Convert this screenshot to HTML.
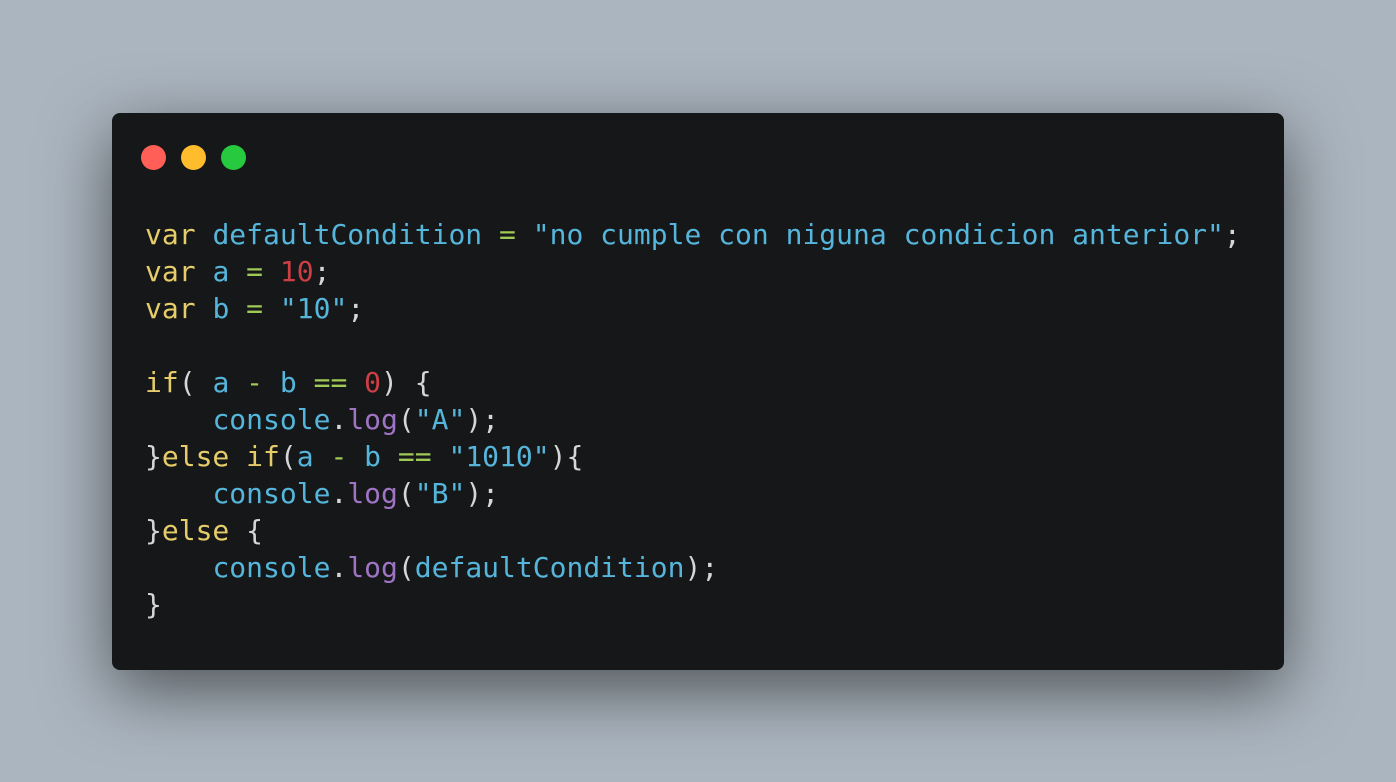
<!DOCTYPE html>
<html><head><style>
html,body{margin:0;padding:0;width:1396px;height:782px;overflow:hidden;background:#abb5bf;}
.win{position:absolute;left:112px;top:113px;width:1172px;height:557px;background:#151718;border-radius:8px;box-shadow:0 20px 68px rgba(0,0,0,0.55);}
.dot{position:absolute;top:32px;width:25px;height:25px;border-radius:50%;}
pre{position:absolute;left:33px;top:103px;margin:0;font-family:"DejaVu Sans Mono","Liberation Mono",monospace;font-size:28px;line-height:37px;color:#d6d6d6;}
.k{color:#e6cd69}.v{color:#55b5db}.o{color:#9fca56}.n{color:#cd3f45}.f{color:#a074c4}
</style></head><body>
<div class="win">
<div class="dot" style="left:29px;background:#ff5f56"></div>
<div class="dot" style="left:69px;background:#ffbd2e"></div>
<div class="dot" style="left:109px;background:#27c93f"></div>
<pre><span class="k">var</span> <span class="v">defaultCondition</span> <span class="o">=</span> <span class="v">"no cumple con niguna condicion anterior"</span>;
<span class="k">var</span> <span class="v">a</span> <span class="o">=</span> <span class="n">10</span>;
<span class="k">var</span> <span class="v">b</span> <span class="o">=</span> <span class="v">"10"</span>;

<span class="k">if</span>( <span class="v">a</span> <span class="o">-</span> <span class="v">b</span> <span class="o">==</span> <span class="n">0</span>) {
    <span class="v">console</span>.<span class="f">log</span>(<span class="v">"A"</span>);
}<span class="k">else</span> <span class="k">if</span>(<span class="v">a</span> <span class="o">-</span> <span class="v">b</span> <span class="o">==</span> <span class="v">"1010"</span>){
    <span class="v">console</span>.<span class="f">log</span>(<span class="v">"B"</span>);
}<span class="k">else</span> {
    <span class="v">console</span>.<span class="f">log</span>(<span class="v">defaultCondition</span>);
}</pre>
</div>
</body></html>
